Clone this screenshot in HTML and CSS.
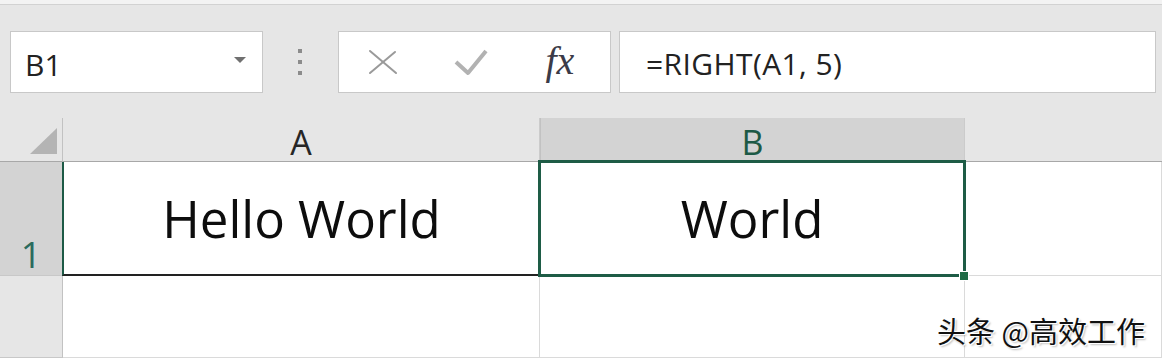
FILE: index.html
```html
<!DOCTYPE html>
<html lang="zh-CN">
<head>
    <meta charset="UTF-8">
    <meta name="viewport" content="width=device-width, initial-scale=1.0">
    <title>RIGHT</title>
    <link rel="stylesheet" href="styles.css">
</head>
<body>
    <div class="topline"></div>
    <div class="toolbar">
        <div class="namebox">
            <span class="ref">B1</span>
            <svg class="caret" width="12" height="6" viewBox="0 0 12 6"><polygon points="0,0 12,0 6,6" fill="#707070"/></svg>
        </div>
        <div class="grip">
            <svg width="4" height="26" viewBox="0 0 4 26">
                <rect x="0" y="0" width="4" height="4" fill="#8c8c8c"/>
                <rect x="0" y="11" width="4" height="4" fill="#8c8c8c"/>
                <rect x="0" y="22" width="4" height="4" fill="#8c8c8c"/>
            </svg>
        </div>
        <div class="fbtns">
            <span class="fbtn">
                <svg width="30" height="26" viewBox="0 0 30 26">
                    <path d="M2 2 L28 24" stroke="#9a9a9a" stroke-width="2" fill="none" stroke-linecap="round"/>
                    <path d="M27 3 L2 24" stroke="#9a9a9a" stroke-width="2" fill="none" stroke-linecap="round"/>
                </svg>
            </span>
            <span class="fbtn">
                <svg width="34" height="28" viewBox="0 0 34 28">
                    <path d="M2 14 L14 25 L32 3" stroke="#b2b2b2" stroke-width="4" fill="none" stroke-linejoin="round"/>
                </svg>
            </span>
            <span class="fbtn fx">fx</span>
        </div>
        <div class="formula">=RIGHT(A1, 5)</div>
    </div>

    <div class="sheet">
        <div class="corner">
            <svg width="27" height="26" viewBox="0 0 27 26"><polygon points="27,0 27,26 0,26" fill="#b4b4b4"/></svg>
        </div>
        <div class="colhead">A</div>
        <div class="colhead sel">B</div>
        <div class="colhead rest"></div>

        <div class="rowhead sel">1</div>
        <div class="cell a1">Hello World</div>
        <div class="cell b1">World<span class="handle"></span></div>
        <div class="cell"></div>

        <div class="rowhead"></div>
        <div class="cell"></div>
        <div class="cell"></div>
        <div class="cell"></div>
    </div>

    <div class="watermark">头条 @高效工作</div>
</body>
</html>
```

FILE: styles.css
```css
body {
    font-family: "Open Sans", "Noto Sans CJK SC", sans-serif;
    background-color: #e6e6e6;
    margin: 0;
    padding: 0;
    width: 1162px;
    height: 358px;
    overflow: hidden;
    position: relative;
}
.topline {
    height: 4px;
    background-color: #f3f3f3;
    border-bottom: 1px solid #d2d2d2;
}
.toolbar {
    display: flex;
    height: 62px;
    padding: 26px 0 0 10px;
}
.namebox {
    width: 253px;
    box-sizing: border-box;
    background-color: #fff;
    border: 1px solid #c8c8c8;
    display: flex;
    align-items: center;
    padding: 4px 0 0 14px;
}
.ref {
    font-size: 30px;
    color: #222;
}
.caret {
    margin-left: auto;
    margin-right: 16px;
    margin-top: -8px;
}
.grip {
    width: 75px;
    display: flex;
    justify-content: center;
    align-items: center;
    padding-right: 2px;
    box-sizing: border-box;
}
.fbtns {
    width: 273px;
    box-sizing: border-box;
    background-color: #fff;
    border: 1px solid #c8c8c8;
    display: flex;
}
.fbtn {
    flex: 1;
    display: flex;
    justify-content: center;
    align-items: center;
}
.fx {
    font-family: "Liberation Serif", serif;
    font-style: italic;
    font-size: 40px;
    color: #3b3b48;
    padding: 0 6px 4px 0;
}
.formula {
    flex: 1;
    margin-left: 8px;
    margin-right: 6px;
    background-color: #fff;
    border: 1px solid #c8c8c8;
    display: flex;
    align-items: center;
    padding: 3px 0 0 26px;
    font-size: 30px;
    letter-spacing: 0.4px;
    color: #222;
}
.sheet {
    margin-top: 25px;
    display: grid;
    grid-template-columns: 63px 477px 425px 1fr;
    grid-template-rows: 44px 114px 1fr;
    height: 240px;
}
.corner {
    border-right: 1px solid #c2c2c2;
    border-bottom: 1px solid #a8a8a8;
    box-sizing: border-box;
    display: flex;
    justify-content: flex-end;
    align-items: flex-end;
    padding: 0 5px 7px 0;
}
.colhead {
    box-sizing: border-box;
    border-bottom: 1px solid #a8a8a8;
    border-right: 1px solid #cbcbcb;
    display: flex;
    justify-content: center;
    align-items: flex-end;
    font-size: 34px;
    line-height: 1;
    padding-bottom: 2px;
    color: #262626;
}
.colhead.sel {
    background-color: #d3d3d3;
    border-left: 1px solid #c2c2c2;
    color: #1d5a46;
}
.colhead.rest {
    border-right: none;
}
.rowhead {
    box-sizing: border-box;
    border-right: 1px solid #c2c2c2;
    border-bottom: 1px solid #c8c8c8;
    display: flex;
    justify-content: center;
    align-items: flex-end;
    font-size: 36px;
    line-height: 1;
    padding-bottom: 2px;
    color: #2b6b5d;
}
.rowhead.sel {
    background-color: #d3d3d3;
}
.cell {
    box-sizing: border-box;
    background-color: #fff;
    border-right: 1px solid #dadada;
    border-bottom: 1px solid #dadada;
    display: flex;
    justify-content: center;
    align-items: center;
    font-size: 51px;
    line-height: 1;
    color: #0d0d0d;
}
.a1 {
    border-left: 2px solid #1d5a46;
    border-bottom: 2px solid #222;
    margin-left: -1px;
}
.b1 {
    position: relative;
}
.b1::after {
    content: "";
    position: absolute;
    top: -2px;
    left: -2px;
    right: -2px;
    bottom: -2px;
    border: 3px solid #1e5c46;
}
.handle {
    position: absolute;
    right: -5px;
    bottom: -6px;
    width: 8px;
    height: 8px;
    background-color: #1e6b45;
    border: 1px solid #fff;
    z-index: 1;
}
.watermark {
    position: absolute;
    left: 937px;
    top: 313px;
    font-family: "Noto Sans CJK SC", sans-serif;
    font-size: 29px;
    line-height: 1.2;
    color: #111;
    text-shadow: 1px 1px 0 #fff, -1px -1px 0 #fff, 2px 2px 2px rgba(0,0,0,0.25);
}
```
